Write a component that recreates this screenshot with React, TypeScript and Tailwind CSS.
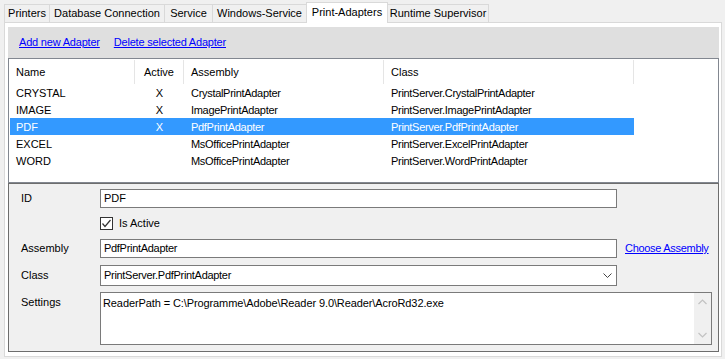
const rows = [
  { name: "CRYSTAL", active: true, assembly: "CrystalPrintAdapter", cls: "PrintServer.CrystalPrintAdapter" },
  { name: "IMAGE", active: true, assembly: "ImagePrintAdapter", cls: "PrintServer.ImagePrintAdapter" },
  { name: "PDF", active: true, assembly: "PdfPrintAdapter", cls: "PrintServer.PdfPrintAdapter", selected: true },
  { name: "EXCEL", active: false, assembly: "MsOfficePrintAdapter", cls: "PrintServer.ExcelPrintAdapter" },
  { name: "WORD", active: false, assembly: "MsOfficePrintAdapter", cls: "PrintServer.WordPrintAdapter" },
];

export default function App() {
  return (
    <div
      className="w-[725px] h-[359px] bg-[#f0f0f0] text-[11px] text-black overflow-hidden"
      style={{ fontFamily: '"Liberation Sans", Arial, sans-serif' }}
    >
      {/* Tab strip */}
      <div className="h-[22px] pl-[4px] flex items-end">
        <Tab className="w-[46px]" label="Printers" />
        <Tab className="w-[116px]" label="Database Connection" />
        <Tab className="w-[49px]" label="Service" />
        <Tab className="w-[95px]" label="Windows-Service" />
        <div className="relative z-10 -mb-px -mr-px h-[21px] w-[82px] bg-white border border-b-0 border-[#d9d9d9] flex items-start justify-center pt-[3px] leading-[13px]">
          Print-Adapters
        </div>
        <Tab className="w-[102px]" label="Runtime Supervisor" />
      </div>

      {/* Tab page */}
      <div className="ml-[4px] w-[718px] h-[335px] bg-white border border-[#d9d9d9] pt-[4px] pl-[3px]">
        {/* Toolbar */}
        <div className="w-[711px] h-[31px] bg-[#dfdfdf] flex items-center gap-[14px] pl-[11px] pb-[1px] tracking-[-0.2px]">
          <a className="text-[#0000ff] underline cursor-pointer">Add new Adapter</a>
          <a className="text-[#0000ff] underline cursor-pointer">Delete selected Adapter</a>
        </div>

        {/* List view */}
        <div className="w-[711px] h-[125px] border border-[#828790] bg-white">
          <div className="flex h-[25px] pt-[1px]">
            <div className="w-[126px] pl-[7px] flex items-center border-r border-[#e5e5e5]">Name</div>
            <div className="w-[49px] flex items-center justify-center border-r border-[#e5e5e5]">Active</div>
            <div className="w-[200px] pl-[7px] flex items-center border-r border-[#e5e5e5]">Assembly</div>
            <div className="w-[250px] pl-[7px] flex items-center border-r border-[#e5e5e5]">Class</div>
          </div>
          {rows.map((r) => (
            <div
              key={r.name}
              className={`ml-[1px] w-[624px] h-[17px] pt-[1px] flex items-center ${
                r.selected ? "bg-[#3399ff] text-white" : ""
              }`}
            >
              <div className="w-[125px] pl-[6px]">{r.name}</div>
              <div className="w-[49px] text-center">{r.active ? "X" : ""}</div>
              <div className="w-[200px] pl-[7px] tracking-[-0.3px]">{r.assembly}</div>
              <div className="w-[250px] pl-[7px] tracking-[-0.3px]">{r.cls}</div>
            </div>
          ))}
        </div>

        {/* Detail panel */}
        <div className="w-[711px] h-[169px] border border-[#6d6d6d] bg-[#f0f0f0] flex flex-col">
          <div className="mt-[5px] flex items-center h-[19px]">
            <div className="w-[91px] pl-[12px]">ID</div>
            <div className="w-[517px] h-[19px] bg-white border border-[#7a7a7a] pl-[3px] flex items-center">PDF</div>
          </div>

          <div className="mt-[9px] flex items-center h-[13px] pl-[91px] gap-[6px]">
            <div className="w-[13px] h-[13px] bg-white border border-[#333333] flex items-center justify-center">
              <svg width="11" height="11" viewBox="0 0 11 11">
                <polyline points="1.5,5.5 4,8.5 9.5,2" fill="none" stroke="#333333" strokeWidth="1.2" />
              </svg>
            </div>
            <span>Is Active</span>
          </div>

          <div className="mt-[9px] flex items-center h-[19px]">
            <div className="w-[91px] pl-[12px]">Assembly</div>
            <div className="w-[517px] h-[19px] bg-white border border-[#7a7a7a] pl-[3px] flex items-center tracking-[-0.3px]">
              PdfPrintAdapter
            </div>
            <a className="ml-[8px] text-[#0000ff] underline cursor-pointer tracking-[-0.3px]">Choose Assembly</a>
          </div>

          <div className="mt-[7px] flex items-center h-[21px]">
            <div className="w-[91px] pl-[12px]">Class</div>
            <div className="w-[517px] h-[21px] bg-white border border-[#7a7a7a] pl-[3px] pr-[4px] flex items-center justify-between">
              <span className="tracking-[-0.3px]">PrintServer.PdfPrintAdapter</span>
              <svg width="9" height="6" viewBox="0 0 9 6">
                <polyline points="0.5,0.5 4.5,4.5 8.5,0.5" fill="none" stroke="#444444" strokeWidth="1" />
              </svg>
            </div>
          </div>

          <div className="mt-[6px] flex items-start">
            <div className="w-[91px] pl-[12px] pt-[2px]">Settings</div>
            <div className="w-[612px] h-[53px] bg-white border border-[#7a7a7a] flex">
              <div className="flex-1 pl-[2px] pt-[2px] tracking-[-0.1px]">
                ReaderPath = C:\Programme\Adobe\Reader 9.0\Reader\AcroRd32.exe
              </div>
              <div className="w-[17px] bg-[#f0f0f0] flex flex-col items-center justify-between py-[6px]">
                <svg width="9" height="6" viewBox="0 0 9 6">
                  <polyline points="0.5,5 4.5,1 8.5,5" fill="none" stroke="#c2c2c2" strokeWidth="1.2" />
                </svg>
                <svg width="9" height="6" viewBox="0 0 9 6">
                  <polyline points="0.5,1 4.5,5 8.5,1" fill="none" stroke="#c2c2c2" strokeWidth="1.2" />
                </svg>
              </div>
            </div>
          </div>
        </div>
      </div>
    </div>
  );
}

function Tab({ label, className }: { label: string; className: string }) {
  return (
    <div
      className={`h-[18px] bg-[#f0f0f0] border border-b-0 border-[#d9d9d9] -mr-px flex items-center justify-center leading-[13px] ${className}`}
    >
      {label}
    </div>
  );
}
